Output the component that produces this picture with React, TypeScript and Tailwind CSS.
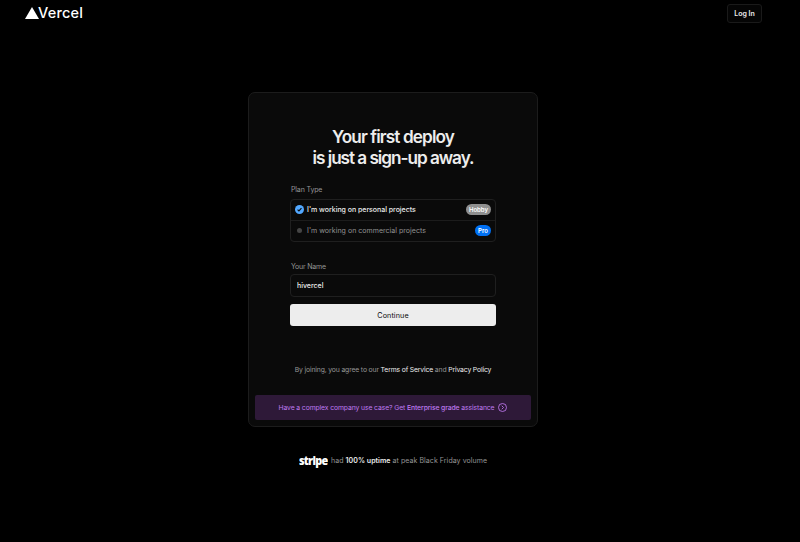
const plans = [
  { label: "I'm working on personal projects", badge: "Hobby", selected: true },
  { label: "I'm working on commercial projects", badge: "Pro", selected: false },
];

function CheckedDot() {
  return (
    <svg viewBox="0 0 16 16" className="size-[9px]">
      <circle cx="8" cy="8" r="8" fill="#52a8ff" />
      <path d="M4.6 8.3 7 10.6l4.5-4.9" fill="none" stroke="#0a0a0a" strokeWidth="2" />
    </svg>
  );
}

function Header() {
  return (
    <header className="flex h-[26px] items-center justify-between pr-[38px] pl-[25px]">
      <a href="#" className="flex items-center text-[#fff]">
        <svg viewBox="0 0 14 12" className="h-3 w-3.5" fill="currentColor">
          <path d="M7 0l7 12H0z" />
        </svg>
        <span className="-ml-px text-[14.5px] leading-none font-medium tracking-[0.2px]">Vercel</span>
      </a>
      <button className="h-[19px] w-[35px] rounded-[3px] border border-[#1a1a1a] bg-[#050505] text-[7px] leading-none font-semibold whitespace-nowrap text-[#ededed]">
        Log In
      </button>
    </header>
  );
}

function PlanPicker() {
  return (
    <div className="mt-1 h-[43px] divide-y divide-[#1c1c1c] rounded-[4px] border border-[#1f1f1f]">
      {plans.map(({ label, badge, selected }) => (
        <div key={label} className="flex h-[20.5px] items-center pr-1 pl-1">
          <span className="flex w-[9px] justify-center">
            {selected ? <CheckedDot /> : <i className="size-[5px] rounded-full bg-[#454545]" />}
          </span>
          <span
            className={`ml-[3px] grow text-[7px] ${
              selected ? "font-medium tracking-[-0.02px] text-[#ededed]" : "tracking-[0.03px] text-[#949494]"
            }`}
          >
            {label}
          </span>
          <span
            className={`flex h-[11px] items-center rounded-full text-[6px] font-semibold text-white ${
              selected ? "w-[25px] justify-center bg-[#8f8f8f]" : "w-4 justify-center bg-[#0070f3]"
            }`}
          >
            {badge}
          </span>
        </div>
      ))}
    </div>
  );
}

export default function App() {
  return (
    <div className="h-[542px] overflow-hidden bg-black font-[Inter,sans-serif] text-[7px] leading-[10px] text-[#969696] antialiased">
      <Header />
      <main className="flex w-[786px] flex-col items-center pt-[66px]">
        <section className="flex h-[335px] w-[290px] flex-col rounded-[7px] border border-[#1c1c1c] bg-[#0a0a0a] px-1.5 pb-1.5">
          <h1 className="mt-[33px] text-center text-[17.2px] leading-[21px] font-semibold text-[#ededed]">
            <span className="block tracking-[-0.88px]">Your first deploy</span>
            <span className="block tracking-[-1.04px]">is just a sign-up away.</span>
          </h1>
          <form className="mx-auto mt-[17px] w-[206px]">
            <p className="pl-px tracking-[-0.15px]">Plan Type</p>
            <PlanPicker />
            <label className="mt-[20px] block pl-px tracking-[-0.2px]" htmlFor="name">
              Your Name
            </label>
            <input
              id="name"
              defaultValue="hivercel"
              className="mt-[2px] block h-[23px] w-full rounded-[4px] border border-[#1f1f1f] bg-[#0a0a0a] px-1.5 text-[7px] font-medium text-[#ededed] outline-none"
            />
            <button
              type="button"
              className="mt-[7px] block h-[22px] w-full rounded-[3px] bg-[#ededed] pt-px text-[7.2px] tracking-[0.1px] text-[#0a0a0a]"
            >
              Continue
            </button>
          </form>
          <p className="mt-[39px] text-center text-[6.8px] tracking-[-0.14px]">
            By joining, you agree to our <a className="text-[#ededed]">Terms of Service</a> and{" "}
            <a className="text-[#ededed]">Privacy Policy</a>
          </p>
          <a className="mt-auto flex h-[25px] items-center justify-center gap-1 rounded-[2px] bg-[#2e1938] text-[#bf7af0]">
            <span className="text-[6.8px] tracking-[-0.1px]">
              Have a complex company use case? Get <span className="font-medium">Enterprise grade</span> assistance
            </span>
            <svg viewBox="0 0 18 18" className="size-[9px]" fill="none" stroke="currentColor" strokeWidth="1.7">
              <circle cx="9" cy="9" r="8" />
              <path d="M7.5 5.5 11 9l-3.5 3.5" />
            </svg>
          </a>
        </section>
        <p className="mt-[27px] flex h-[13px] items-center">
          <span className="w-8 origin-left scale-x-90 font-['Open_Sans',sans-serif] text-[12px] leading-[12px] font-extrabold tracking-[-0.8px] text-white">
            stripe
          </span>
          <span className="tracking-[0.06px]">
            had <b className="font-semibold text-[#ededed]">100% uptime</b> at peak Black Friday volume
          </span>
        </p>
      </main>
    </div>
  );
}
